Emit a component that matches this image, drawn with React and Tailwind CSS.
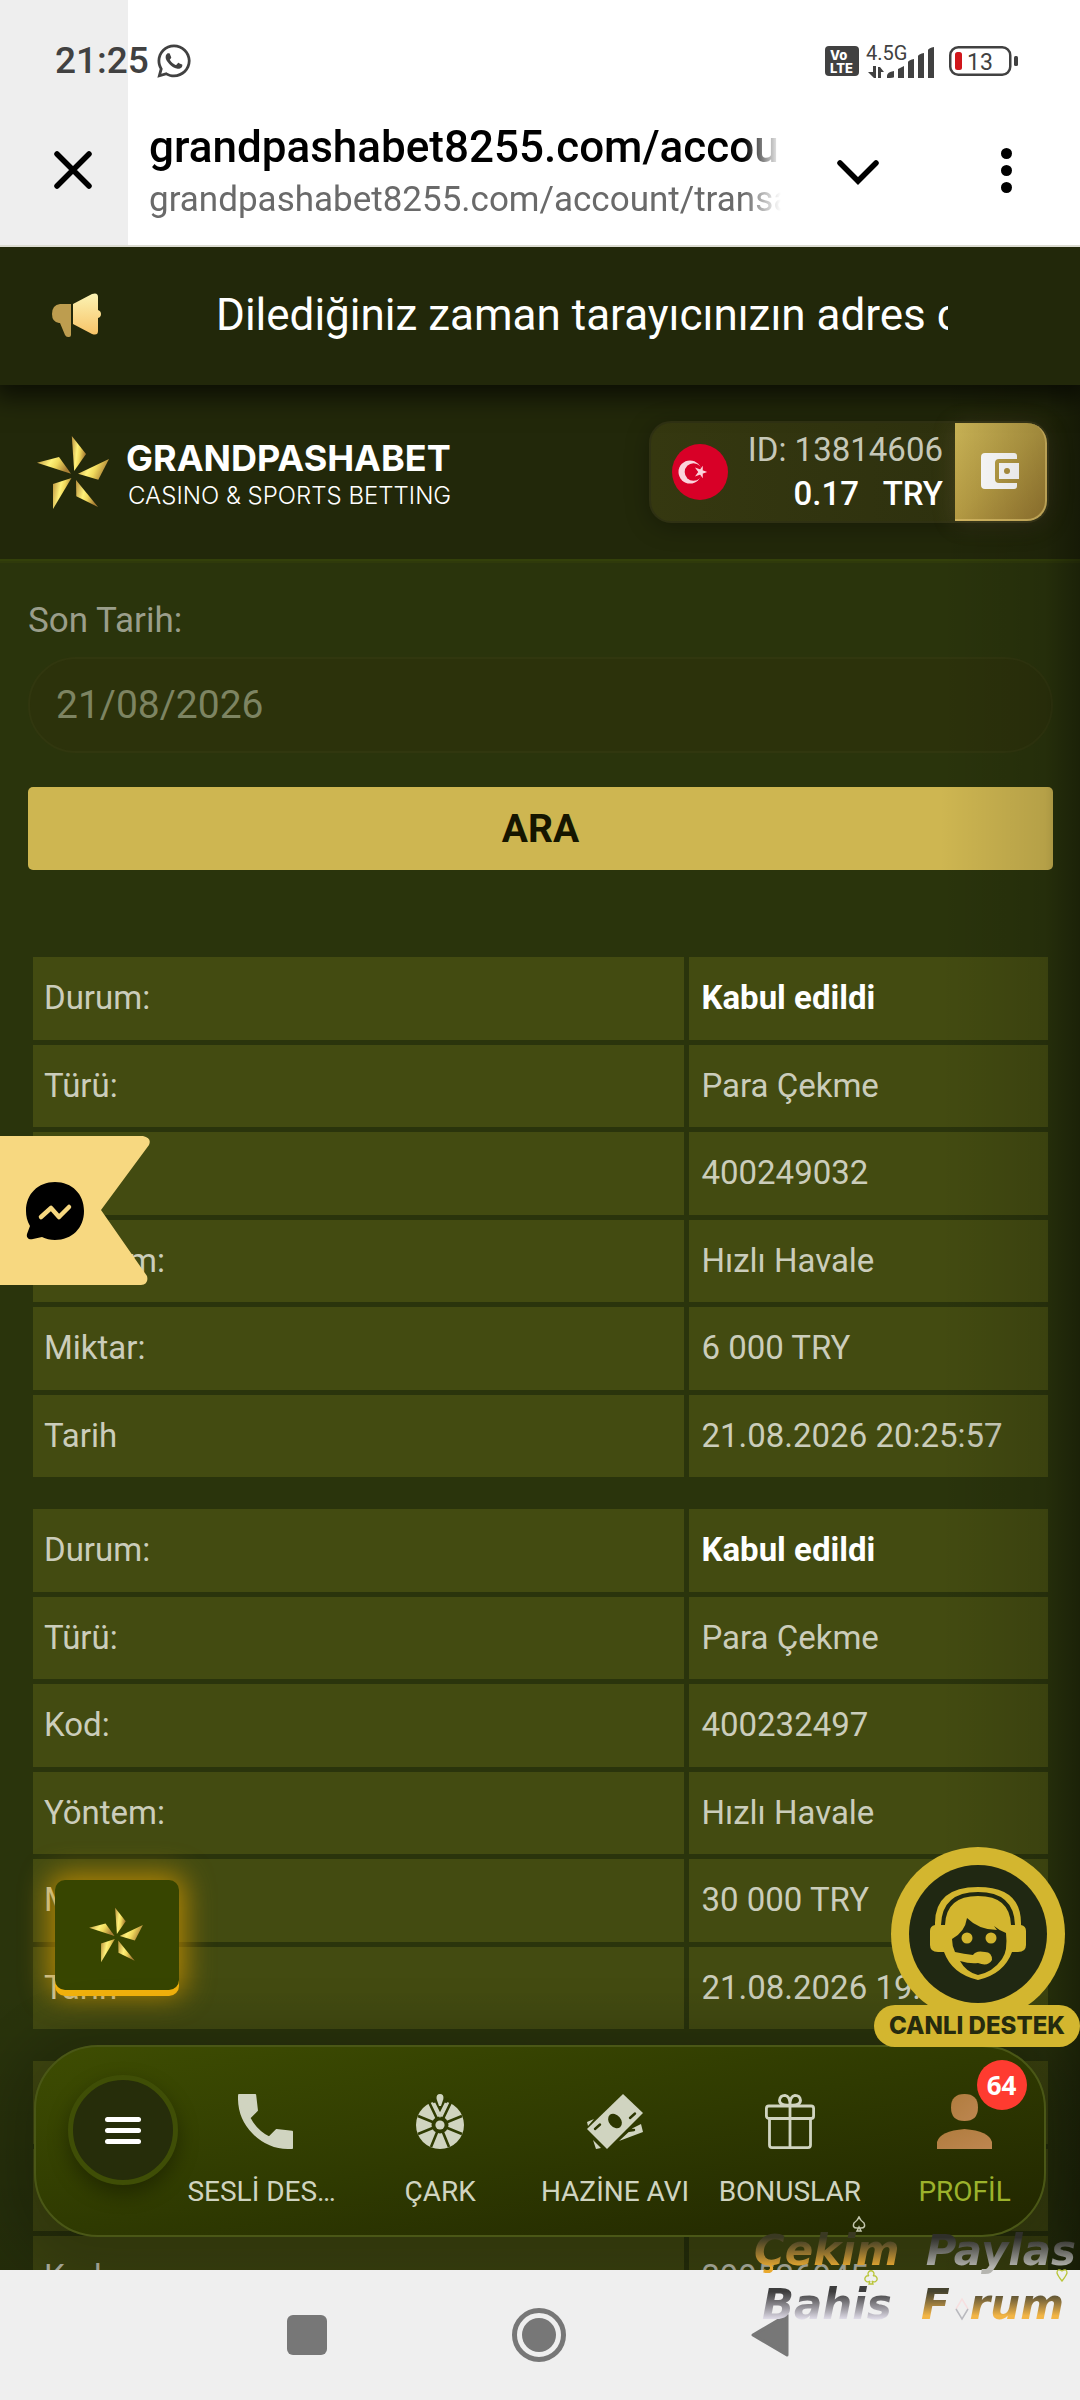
import { FaWhatsapp } from "react-icons/fa";

const records = [
  {
    durum: "Kabul edildi",
    turu: "Para Çekme",
    kod: "400249032",
    yontem: "Hızlı Havale",
    miktar: "6 000 TRY",
    tarih: "21.08.2026 20:25:57",
  },
  {
    durum: "Kabul edildi",
    turu: "Para Çekme",
    kod: "400232497",
    yontem: "Hızlı Havale",
    miktar: "30 000 TRY",
    tarih: "21.08.2026 19:",
  },
  {
    durum: "",
    turu: "",
    kod: "399526945",
    yontem: "",
    miktar: "",
    tarih: "",
  },
];

const fields = [
  ["durum", "Durum:"],
  ["turu", "Türü:"],
  ["kod", "Kod:"],
  ["yontem", "Yöntem:"],
  ["miktar", "Miktar:"],
  ["tarih", "Tarih"],
];

function StarLogo({ id, className }) {
  return (
    <svg viewBox="0 0 74 75" className={className} aria-hidden="true">
      <defs>
        <linearGradient id={id} x1="0" x2="1" y1="0" y2="0.3">
          <stop offset="0" stopColor="#b98f3c" />
          <stop offset="0.45" stopColor="#fff27a" />
          <stop offset="0.65" stopColor="#f0d95c" />
          <stop offset="1" stopColor="#a97f35" />
        </linearGradient>
      </defs>
      <g>
        <path d="M35.8 1 50 19 38.2 36Z" fill={`url(#${id})`} />
        <path d="M73 24 62.3 44.7 42 38.7Z" fill={`url(#${id})`} />
        <path d="M62 72 40.3 61.3 40 45Z" fill={`url(#${id})`} />
        <path d="M17 74V49l18.5-6Z" fill={`url(#${id})`} />
        <path d="M1 27.7 23 22l12 16.7Z" fill={`url(#${id})`} />
      </g>
    </svg>
  );
}

function StatusBar() {
  return (
    <div className="flex h-[122px] items-center justify-between pl-[55px] pr-[62px] text-[#414141]">
      <div className="flex items-center gap-[6px]">
        <span className="text-[37px] leading-10 font-medium">21:25</span>
        <FaWhatsapp className="size-[38px]" />
      </div>
      <div className="flex items-center">
        <svg viewBox="0 0 34 30" className="h-[30px] w-[34px]">
          <rect width="34" height="30" rx="4" fill="#414141" />
          <g fill="#fff" fontFamily="Inter, sans-serif" fontWeight="800">
            <text x="5" y="14" fontSize="13">Vo</text>
            <text x="5" y="27" fontSize="13">LTE</text>
          </g>
        </svg>
        <svg viewBox="0 0 70 36" className="mr-[13px] ml-[7px] h-9 w-[70px]" fill="#414141">
          <text x="0" y="17" fontSize="20" fontFamily="Roboto, sans-serif">4.5G</text>
          <path d="M2 29h5v-6h3v12H8zM12 24h2l4 5h-3v6h-3z" />
          <path d="M21 33q0-4 7-5v6q0 1-7 1zM32 26l6-3v12h-6zM42 19q1-2 6-3v19h-6zM52 13q1-2 6-3v25h-6zM62 7q1-2 6-3v31h-6z" />
        </svg>
        <svg viewBox="0 0 69 30" className="h-[30px] w-[69px]">
          <rect x="1.25" y="1.25" width="60" height="27.5" rx="8" fill="none" stroke="#414141" strokeWidth="2.5" />
          <rect x="65" y="10" width="4" height="10" rx="1.5" fill="#414141" />
          <rect x="6" y="6" width="7" height="18" rx="2.5" fill="#d0161b" />
          <text x="18" y="24" fontSize="23" fill="#414141" fontFamily="Roboto, sans-serif">13</text>
        </svg>
      </div>
    </div>
  );
}

function BrowserBar() {
  return (
    <div className="flex h-[123px] items-start">
      <button type="button" aria-label="Kapat" className="flex h-24 w-[149px] shrink-0 items-center justify-center pr-1">
        <svg viewBox="0 0 38 38" className="size-[38px]" stroke="#000" strokeWidth="5.5" strokeLinecap="round">
          <path d="M3 3l32 32M35 3 3 35" />
        </svg>
      </button>
      <div className="min-w-0 flex-1 overflow-hidden whitespace-nowrap [mask-image:linear-gradient(to_right,black_calc(100%-40px),transparent_calc(100%-3px))]">
        <p className="text-[44px] leading-[50px] font-medium text-black">grandpashabet8255.com/account</p>
        <p className="mt-2 text-[35px] leading-10 text-[#6a6a6a]">grandpashabet8255.com/account/transactions</p>
      </div>
      <button type="button" aria-label="Küçült" className="flex h-24 w-[148px] shrink-0 items-center justify-center pt-1">
        <svg viewBox="0 0 42 26" className="h-[26px] w-[42px]" fill="none" stroke="#000" strokeWidth="5.5" strokeLinecap="round">
          <path d="m3 4 18 18L39 4" />
        </svg>
      </button>
      <button type="button" aria-label="Menü" className="flex h-24 w-[148px] shrink-0 flex-col items-center justify-center gap-[6px]">
        <span className="size-[11px] rounded-full bg-black" />
        <span className="size-[11px] rounded-full bg-black" />
        <span className="size-[11px] rounded-full bg-black" />
      </button>
    </div>
  );
}

function Announcement() {
  return (
    <div className="relative z-10 flex h-[138px] items-center bg-[#22280a] pr-[132px] pb-[2px] pl-[51px] shadow-[0_6px_24px_6px_rgba(0,0,0,0.65)]">
      <svg viewBox="0 0 50 46" className="h-[46px] w-[50px] shrink-0">
        <defs>
          <linearGradient id="horn" x1="0" x2="0" y1="0" y2="1">
            <stop offset="0" stopColor="#fbf3b4" />
            <stop offset="1" stopColor="#f8c468" />
          </linearGradient>
        </defs>
        <path d="M9 12h11v31q0 2-2 2h-1q-2 0-3-2L9 31h-1Q1 30 1 22 1 13 9 12z" fill="#bd9d4f" />
        <path d="M22 12 41 2q6-2 6 3v13q3 1 3 4t-3 4v13q0 5-6 3L22 32z" fill="url(#horn)" />
      </svg>
      <p className="ml-[115px] flex-1 overflow-hidden text-[44px] leading-[56px] whitespace-nowrap text-white">
        Dilediğiniz zaman tarayıcınızın adres c
      </p>
    </div>
  );
}

function Header() {
  return (
    <header className="flex h-44 items-center justify-between border-b-2 border-[#33400a] bg-[#22280a] pr-[31px] pl-9 shadow-[0_2px_0_#2f3a0b]">
      <a href="#anasayfa" className="flex items-center gap-4">
        <StarLogo id="gold-main" className="h-[75px] w-[74px]" />
        <span className="flex flex-col pt-2 whitespace-nowrap text-white">
          <span className="font-[Inter,sans-serif] text-[36px] leading-10 font-bold">GRANDPASHABET</span>
          <span className="pl-[2px] font-[Inter,sans-serif] text-[24px] leading-9 font-light">CASINO &amp; SPORTS BETTING</span>
        </span>
      </a>
      <div className="flex h-[102px] w-[400px] items-stretch rounded-[22px] border-2 border-[#2f3113] bg-linear-to-r from-[#353810] to-[#2c2f0e] shadow-[0_4px_24px_rgba(0,0,0,0.3)]">
        <div className="flex flex-1 items-center justify-between pr-3 pl-[21px]">
          <svg viewBox="0 0 56 56" className="size-14">
            <circle cx="28" cy="28" r="28" fill="#d80027" />
            <circle cx="18" cy="28" r="11.500" fill="#fbd3dc" />
            <circle cx="21.500" cy="28" r="8.800" fill="#d80027" />
            <path d="m33 28-8-3 5 7v-8l-5 7z" fill="#fbd3dc" stroke="#fbd3dc" strokeWidth="1.500" />
          </svg>
          <p className="text-right text-[33px] leading-[44px] whitespace-pre">
            <span className="block text-[#c6c8b8]">ID: 13814606</span>
            <span className="block font-medium text-white">0.17{"   "}TRY</span>
          </p>
        </div>
        <button
          type="button"
          aria-label="Cüzdan"
          className="flex w-[92px] items-center justify-center rounded-r-[20px] border-r-2 border-b-2 border-[#d3b660] bg-linear-to-br from-[#cbb557] via-[#b69c44] to-[#997a31] shadow-[0_2px_24px_rgba(190,150,110,0.18)]"
        >
          <svg viewBox="0 0 38 36" className="h-9 w-[38px]">
            <path d="M4 0h29q3 0 3 3v3H18q-4 0-4 4v16q0 4 4 4h18v3q0 3-3 3H4q-4 0-4-4V4q0-4 4-4z" fill="#ffffff" />
            <path d="M18 10h20v16H18z" fill="#ffffff" />
            <circle cx="26" cy="18" r="3" fill="#b0933f" />
          </svg>
        </button>
      </div>
    </header>
  );
}

function RecordTable({ record }) {
  return (
    <table className="h-[530px] w-full table-fixed border-separate border-spacing-[5px] text-left text-[33px] leading-10 text-[#cbcdbb]">
      <colgroup>
        <col className="w-[64.5%]" />
        <col />
      </colgroup>
      <tbody>
        {fields.map(([key, label]) => (
          <tr key={key} className="h-[82px]">
            <th scope="row" className="bg-[#434b11] px-[11px] py-0 font-normal">
              {key !== "kod" && !record[key] ? "" : label}
            </th>
            <td className={key === "durum" ? "bg-[#434b11] px-3 py-0 font-bold text-white" : "bg-[#434b11] px-3 py-0"}>
              {record[key]}
            </td>
          </tr>
        ))}
      </tbody>
    </table>
  );
}

function MessengerFlag() {
  return (
    <button type="button" aria-label="Messenger" className="absolute top-[889px] left-0">
      <svg viewBox="0 0 150 150" className="size-[150px]">
        <path d="M0 0h143q9 2 6 9L101 74l46 66q2 8-6 9H0z" fill="#f7d880" />
        <path d="M55 46c17 0 29 12 29 29s-12 29-29 29c-5 0-9-1-13-3l-9 2c-4 1-7-1-6-5l3-8c-3-5-4-10-4-15 0-17 12-29 29-29z" fill="#000" />
        <path d="m41 81 10-9 8 9 10-10" fill="none" stroke="#f7d880" strokeWidth="4.5" strokeLinecap="round" strokeLinejoin="round" />
      </svg>
    </button>
  );
}

function SupportButton() {
  return (
    <button type="button" className="absolute right-0 bottom-[223px] z-20 flex w-[206px] flex-col items-center">
      <svg viewBox="0 0 174 158" className="h-[158px] w-[174px] overflow-visible" aria-hidden="true">
        <circle cx="88" cy="87" r="87" fill="#d3b62f" />
        <circle cx="88" cy="87" r="69" fill="#202812" />
        <path
          d="M45 78q-1-38 43-38t43 38q5 1 5 6v14q0 7-8 7h-6q-8 22-34 28-26-6-34-28h-6q-8 0-8-7V84q0-5 5-6z"
          fill="#d3b62f"
        />
        <path d="M53 78q1-31 35-31t35 31" fill="none" stroke="#202812" strokeWidth="4" />
        <path
          d="M62 92q13-7 15-21 12 12 30 12l-3-4q6 5 12 7 2 18-4 26-9 13-24 16-12-3-18-14 10 3 18 2 10 4 14-3 0-8-7-8-9-2-12 3-9-1-18-3-3-6-3-13z"
          fill="#202812"
        />
        <circle cx="77" cy="91" r="5.500" fill="#d3b62f" />
        <circle cx="101" cy="91" r="5.500" fill="#d3b62f" />
      </svg>
      <span className="w-full rounded-full bg-[#d3b62f] text-center font-[Inter,sans-serif] text-[24px] leading-[42px] font-extrabold whitespace-nowrap text-[#262b0e]">
        CANLI DESTEK
      </span>
    </button>
  );
}

function PhoneIcon() {
  return (
    <svg viewBox="2.7 2.7 18.6 18.6" className="size-[55px]" fill="#d0d4c0" stroke="#d0d4c0" strokeWidth="0.6" strokeLinejoin="round">
      <path d="m21 15.46-5.27-.61-2.52 2.52a15.045 15.045 0 0 1-6.59-6.59l2.53-2.53L8.54 3H3.03C2.45 13.18 10.82 21.55 21 20.97z" />
    </svg>
  );
}

function WheelIcon() {
  return (
    <svg viewBox="0 0 48 55" className="h-[55px] w-12">
      <circle cx="24" cy="31" r="24" fill="#d0d4c0" />
      <g stroke="#303c02" strokeWidth="2.6">
        <path d="M24 31 2 22M24 31l22-9M24 31 2 40M24 31l22 9M24 31l-9 22M24 31l9 22M24 31 12 6M24 31 36 6" />
      </g>
      <circle cx="24" cy="31" r="8.5" fill="#303c02" />
      <path d="M15 4 24 23 33 4z" fill="#303c02" />
      <path d="m18 9 6 12 6-12" fill="none" stroke="#d0d4c0" strokeWidth="2.6" />
      <circle cx="24" cy="31" r="4.6" fill="#d0d4c0" />
      <path d="M24 0q4 0 3.400 5L25 12h-2l-2.400-7Q20 0 24 0z" fill="#d0d4c0" />
    </svg>
  );
}

function MoneyIcon() {
  return (
    <svg viewBox="0 0 56 55" className="h-[55px] w-14">
      <path d="m0 28 7-3-6 7zM6 46l8 8-5 1zM54 30l2 8-24 9 14-13z" fill="#d0d4c0" />
      <path d="M36 0 56 19 20 55 0 35z" fill="#d0d4c0" />
      <ellipse cx="28" cy="27" rx="6" ry="8" transform="rotate(-40 28 27)" fill="#2c3601" />
      <path d="m8 35 5-4.500M43 24l5-4.500M40 37l7-1" stroke="#2c3601" strokeWidth="2.4" strokeLinecap="round" />
    </svg>
  );
}

function GiftIcon() {
  return (
    <svg viewBox="0 0 50 55" className="h-[55px] w-[50px]" fill="none" stroke="#d0d4c0" strokeWidth="2.8" strokeLinejoin="round">
      <rect x="1.400" y="12" width="47.200" height="12.500" rx="2.500" />
      <path d="M4.500 24.500h41V51q0 2.600-2.600 2.600H7q-2.500 0-2.500-2.600zM25 12v41" />
      <path d="M25 11q-10 1-10.500-4.500Q15 1.400 20 1.400q5 .6 5 9.600zM25 11q10 1 10.500-4.500Q35 1.400 30 1.400q-5 .6-5 9.600z" />
    </svg>
  );
}

function ProfileIcon() {
  return (
    <svg viewBox="0 0 55 55" className="size-[55px]">
      <defs>
        <linearGradient id="copper" x1="0" x2="1" y1="0" y2="1">
          <stop offset="0" stopColor="#b07c3e" />
          <stop offset="1" stopColor="#bd8650" />
        </linearGradient>
      </defs>
      <g fill="url(#copper)">
        <path d="M27.500 0Q41 0 41 13.500T27.500 27 14 13.500 27.500 0z" />
        <path d="M0 55V48Q3 37 27.500 35 52 37 55 48v7z" />
      </g>
    </svg>
  );
}

const tabs = [
  { label: "SESLİ DESTEK", Icon: PhoneIcon },
  { label: "ÇARK", Icon: WheelIcon },
  { label: "HAZİNE AVI", Icon: MoneyIcon },
  { label: "BONUSLAR", Icon: GiftIcon },
  { label: "PROFİL", Icon: ProfileIcon, badge: "64", active: true },
];

function BottomNav() {
  return (
    <nav className="absolute inset-x-[34px] bottom-[33px] z-10 flex h-48 items-start rounded-[64px] border-2 border-[#4a5716] bg-linear-to-br from-[#3e4d02] via-[#2f3a01] to-[#212600] pl-8 shadow-[0_10px_50px_30px_rgba(0,0,0,0.16)]">
      <button
        type="button"
        aria-label="Menü"
        className="mt-7 flex size-[110px] shrink-0 flex-col items-center justify-center gap-[6px] rounded-full border-5 border-[#3f4e06] bg-[#262d0a] shadow-[0_8px_20px_rgba(0,0,0,0.35)]"
      >
        <span className="h-[5px] w-9 rounded-full bg-white" />
        <span className="h-[5px] w-9 rounded-full bg-white" />
        <span className="h-[5px] w-9 rounded-full bg-white" />
      </button>
      <div className="-mr-2 grid h-full min-w-0 flex-1 grid-cols-5">
        {tabs.map(({ label, Icon, badge, active }) => (
          <button key={label} type="button" className="relative flex min-w-0 flex-col items-center pt-[47px]">
            <Icon />
            {badge && (
              <span className="absolute top-[13px] left-1/2 ml-3 flex size-[50px] items-center justify-center rounded-full bg-[#ff3b30] font-['Open_Sans',sans-serif] text-[26px] leading-8 font-bold text-white">
                {badge}
              </span>
            )}
            <span
              className={
                active
                  ? "mt-[27px] max-w-[156px] truncate text-[28px] leading-8 text-[#9cb22c]"
                  : "mt-[27px] max-w-[156px] truncate text-[28px] leading-8 text-[#d0d4c0]"
              }
            >
              {label}
            </span>
          </button>
        ))}
      </div>
    </nav>
  );
}

function Watermark() {
  return (
    <div className="pointer-events-none absolute right-0 bottom-[68px] z-30 flex w-[326px] flex-col font-['DejaVu_Sans',sans-serif] text-[42px] leading-[54px] font-bold whitespace-nowrap italic">
      <div className="relative flex justify-between">
        <span className="bg-linear-to-b from-[#3a3922] from-25% to-[#e9a92f] to-80% bg-clip-text text-transparent">Çekim</span>
        <span className="bg-linear-to-b from-[#2f2f2a] from-25% to-[#b5b5b0] to-80% bg-clip-text pr-1 text-transparent">Paylas</span>
        <svg viewBox="0 0 14 16" className="absolute -top-2 left-[98px] h-4 w-3.5" fill="none" stroke="#c4c7ae" strokeWidth="1.500">
          <path d="M7 1q1 3 5 6 2 5-3 5H5Q0 12 2 7q4-3 5-6zM7 11l-2 4h4z" />
        </svg>
        <svg viewBox="0 0 12 14" className="absolute top-[44px] right-3 h-3.5 w-3" fill="none" stroke="#b9c53a" strokeWidth="1.300">
          <path d="M6 13Q2 8 1 5q0-5 5-2 5-3 5 2-1 3-5 8z" />
        </svg>
      </div>
      <div className="relative flex justify-between pr-3 pl-2">
        <span className="bg-linear-to-b from-[#3d3d3d] from-25% to-[#dcd8e4] to-75% bg-clip-text pr-1 text-transparent">Bahis</span>
        <span className="flex items-center">
          <span className="bg-linear-to-b from-[#45432f] from-25% to-[#f3b545] to-70% bg-clip-text pr-1 text-transparent">F</span>
          <svg viewBox="0 0 16 24" className="mt-2 h-6 w-4" fill="none" strokeWidth="1.500">
            <path d="M2 12 8 2l6 10" stroke="#f6dfe0" />
            <path d="m2 12 6 10 6-10" stroke="#b9b9be" />
          </svg>
          <span className="bg-linear-to-b from-[#45432f] from-25% to-[#f3b545] to-70% bg-clip-text pr-1 text-transparent">rum</span>
        </span>
        <svg viewBox="0 0 14 15" className="absolute -top-2 left-[110px] h-[15px] w-3.5" fill="none" stroke="#b9c53a" strokeWidth="1.300">
          <path d="M5 6a3 3 0 1 1 4 0 3 3 0 1 1-1 5l1 3H5l1-3a3 3 0 1 1-1-5z" />
        </svg>
      </div>
    </div>
  );
}

function SystemNav() {
  return (
    <div className="relative flex h-[130px] shrink-0 items-center justify-center gap-[185px] bg-[#efefef] pr-1">
      <button type="button" aria-label="Son uygulamalar" className="size-10 rounded-[6px] bg-[#777]" />
      <button type="button" aria-label="Ana ekran" className="flex size-[54px] items-center justify-center rounded-full border-5 border-[#777]">
        <span className="size-[34px] rounded-full bg-[#777]" />
      </button>
      <button type="button" aria-label="Geri">
        <svg viewBox="0 0 38 44" className="h-11 w-[38px]">
          <path d="M36 2v40L2 22z" fill="#777" stroke="#777" strokeWidth="3" strokeLinejoin="round" />
        </svg>
      </button>
    </div>
  );
}

export default function App() {
  return (
    <div className="relative flex h-screen flex-col overflow-hidden font-[Roboto,sans-serif]">
      <div className="shrink-0 border-b-2 border-[#dcdcd2] bg-[linear-gradient(to_right,#eeeeee_128px,#ffffff_128px)]">
        <StatusBar />
        <BrowserBar />
      </div>

      <main className="relative min-h-0 flex-1 overflow-hidden bg-[#2a340c]">
        <Announcement />
        <Header />
        <section className="pt-10 pr-[27px] pl-7">
          <form onSubmit={(e) => e.preventDefault()} className="flex flex-col">
            <label htmlFor="son-tarih" className="text-[35px] leading-10 text-[#9a9e8b]">
              Son Tarih:
            </label>
            <input
              id="son-tarih"
              type="text"
              defaultValue="21/08/2026"
              className="mt-4 h-24 w-full rounded-full border-2 border-[#31370f] bg-[#2c320b] px-[26px] text-[39px] text-[#7d8462]"
            />
            <button type="submit" className="mt-[34px] h-[83px] rounded-[5px] bg-[#ceb651] pt-[2px] text-[39px] font-bold text-[#161600]">
              ARA
            </button>
          </form>
          <div className="mt-[82px] flex flex-col gap-[22px]">
            {records.map((record) => (
              <RecordTable key={record.kod} record={record} />
            ))}
          </div>
        </section>
        <div className="pointer-events-none absolute inset-y-0 right-0 w-[140px] bg-linear-to-r from-transparent via-black/12 via-75% to-black/35" />
        <div className="pointer-events-none absolute inset-x-0 bottom-0 h-72 bg-linear-to-b from-transparent to-black/15" />
        <MessengerFlag />
        <a
          href="#oyunlar"
          aria-label="Oyunlar"
          className="absolute bottom-[280px] left-[55px] flex h-[110px] w-[124px] items-center justify-center rounded-[10px] bg-[#374500] pr-[2px] shadow-[0_6px_0_#f2b20c,0_0_28px_6px_rgba(214,152,0,0.75)]"
        >
          <StarLogo id="gold-small" className="size-[56px]" />
        </a>
        <BottomNav />
        <SupportButton />
      </main>

      <SystemNav />
      <Watermark />
    </div>
  );
}
